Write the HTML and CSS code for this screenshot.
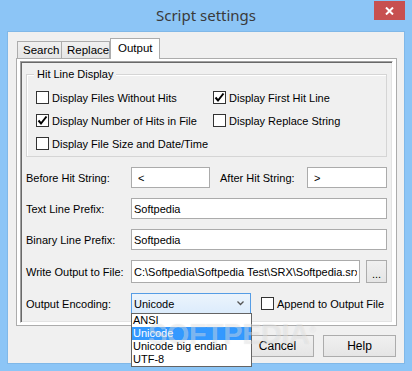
FILE: index.html
```html
<!DOCTYPE html>
<html lang="en">
<head>
  <meta charset="UTF-8" />
  <title>Script settings</title>
  <link rel="stylesheet" href="styles.css">
</head>
<body>

  <div class="window">
    <!-- Title bar -->
    <div class="titlebar">
      <span></span>
      <span class="title">Script settings</span>
      <button class="close-btn" aria-label="Close">
        <svg width="9" height="8" viewBox="0 0 9 8"><path d="M1 0.5 L8 7.5 M8 0.5 L1 7.5" stroke="#fff" stroke-width="2"/></svg>
      </button>
    </div>

    <div class="client">
      <!-- Tabs -->
      <div class="tabs">
        <div class="tab tab-search">Search</div>
        <div class="tab tab-replace">Replace</div>
        <div class="tab tab-output active">Output</div>
      </div>

      <div class="tab-panel">
        <div class="frame">

          <div class="group">
            <div class="legend">Hit Line Display</div>
            <div class="group-grid">
              <label class="check"><span class="box"></span>Display Files Without Hits</label>
              <label class="check"><span class="box checked"><svg width="11" height="11" viewBox="0 0 11 11"><path d="M1.5 5.5 L4 8.5 L9.5 1.5" fill="none" stroke="#000" stroke-width="2"/></svg></span>Display First Hit Line</label>
              <label class="check"><span class="box checked"><svg width="11" height="11" viewBox="0 0 11 11"><path d="M1.5 5.5 L4 8.5 L9.5 1.5" fill="none" stroke="#000" stroke-width="2"/></svg></span>Display Number of Hits in File</label>
              <label class="check"><span class="box"></span>Display Replace String</label>
              <label class="check"><span class="box"></span>Display File Size and Date/Time</label>
            </div>
          </div>

          <div class="form-row row-hit">
            <span class="field-label">Before Hit String:</span>
            <input class="text-input short padded" type="text" value="<">
            <span class="field-label after-label">After Hit String:</span>
            <input class="text-input grow padded" type="text" value=">">
          </div>

          <div class="form-row">
            <span class="field-label">Text Line Prefix:</span>
            <input class="text-input grow" type="text" value="Softpedia">
          </div>

          <div class="form-row">
            <span class="field-label">Binary Line Prefix:</span>
            <input class="text-input grow" type="text" value="Softpedia">
          </div>

          <div class="form-row row-file">
            <span class="field-label">Write Output to File:</span>
            <input class="text-input grow" type="text" value="C:\Softpedia\Softpedia Test\SRX\Softpedia.srx">
            <button class="browse-btn">...</button>
          </div>

          <div class="form-row">
            <span class="field-label">Output Encoding:</span>
            <div class="combo-wrap">
              <div class="combo">
                <span>Unicode</span>
                <svg width="7" height="5" viewBox="0 0 7 5"><path d="M0.5 0.5 L3.5 3.5 L6.5 0.5" fill="none" stroke="#555" stroke-width="1.3"/></svg>
              </div>
              <ul class="combo-list">
                <li>ANSI</li>
                <li class="selected">Unicode</li>
                <li>Unicode big endian</li>
                <li>UTF-8</li>
              </ul>
            </div>
            <label class="check append-check"><span class="box"></span>Append to Output File</label>
          </div>

        </div>
      </div>

      <div class="buttons">
        <button class="btn">OK</button>
        <button class="btn">Cancel</button>
        <button class="btn">Help</button>
      </div>

      <div class="watermark">SOFTPEDIA<sup>®</sup></div>
    </div>
  </div>

</body>
</html>
```

FILE: styles.css
```css
body {
  margin: 0;
  padding: 0;
  font-family: "Liberation Sans", Arial, sans-serif;
  font-size: 11px;
  color: #000;
}
.window {
  width: 412px;
  height: 371px;
  box-sizing: border-box;
  padding: 0 7px 7px;
  background: #8cc5f6;
  display: flex;
  flex-direction: column;
}
.titlebar {
  height: 31px;
  flex-shrink: 0;
  display: grid;
  grid-template-columns: 1fr auto 1fr;
  margin: 0 -7px;
}
.title {
  font-family: "Noto Sans", sans-serif;
  font-size: 15px;
  color: #3a3a3a;
  line-height: 30px;
}
.close-btn {
  justify-self: end;
  width: 31px;
  height: 19px;
  margin: 1px 7px 0 0;
  padding: 0;
  border: none;
  background: #c75050;
  display: flex;
  align-items: center;
  justify-content: center;
}
.client {
  flex: 1;
  position: relative;
  background: #f0f0f0;
  border: 1px solid #80b8e8;
  display: flex;
  flex-direction: column;
}

/* tabs */
.tabs {
  display: flex;
  align-items: flex-end;
  margin: 6px 0 0 9px;
  height: 20px;
}
.tab {
  box-sizing: border-box;
  height: 17px;
  border: 1px solid #acacac;
  border-bottom: none;
  background: linear-gradient(#f0f0f0, #e5e5e5);
  font-size: 11.5px;
  line-height: 16px;
  padding-left: 5px;
}
.tab-search { width: 45px; }
.tab-replace { width: 49px; margin-left: -1px; }
.tab-output { width: 50px; }
.tab.active {
  height: 21px;
  margin-bottom: -1px;
  background: #fff;
  position: relative;
  z-index: 1;
  line-height: 18px;
  padding-left: 7px;
}
.tab-panel {
  box-sizing: border-box;
  width: 381px;
  height: 268px;
  margin-left: 8px;
  padding: 2px 3px;
  background: #fff;
  border: 1px solid #acacac;
}
.frame {
  box-sizing: border-box;
  height: 100%;
  background: #f0f0f0;
  border: 1px solid;
  border-color: #a0a0a0 #fff #fff #a0a0a0;
  box-shadow: inset 1px 1px 0 #696969, inset -1px -1px 0 #e3e3e3;
  padding: 0 5px 0 5px;
  display: flex;
  flex-direction: column;
}

/* group box */
.group {
  margin-top: 12px;
  border: 1px solid #d5d5d5;
  box-shadow: inset 1px 1px 0 #fff;
  padding: 0 0 1px 9px;
}
.legend {
  display: table;
  margin: -7px 0 5px -2px;
  padding: 0 3px;
  background: #f0f0f0;
  line-height: 13px;
}
.group-grid {
  display: grid;
  grid-template-columns: 177px 1fr;
  grid-auto-rows: 23px;
}
.check {
  display: flex;
  align-items: center;
  gap: 3px;
  white-space: nowrap;
}
.box {
  box-sizing: border-box;
  width: 13px;
  height: 13px;
  border: 1px solid #333;
  background: #fff;
  display: flex;
  align-items: center;
  justify-content: center;
  flex-shrink: 0;
}

/* form rows */
.form-row {
  display: flex;
  align-items: center;
  height: 21px;
  margin-top: 10px;
}
.row-file {
  height: 23px;
  gap: 6px;
}
.field-label {
  width: 105px;
  flex-shrink: 0;
  white-space: nowrap;
}
.row-file .field-label {
  margin-right: -6px;
}
.after-label {
  width: 87px;
  margin-left: 10px;
}
.text-input {
  box-sizing: border-box;
  height: 100%;
  border: 1px solid #ababab;
  background: #fff;
  font: inherit;
  padding: 0 2px;
  margin: 0;
  outline: none;
  min-width: 0;
}
.text-input.short { width: 79px; }
.text-input.grow { flex: 1; }
.text-input.padded { padding-left: 6px; }
.browse-btn {
  box-sizing: border-box;
  width: 21px;
  height: 100%;
  border: 1px solid #acacac;
  background: linear-gradient(#f0f0f0, #e5e5e5);
  font: inherit;
  padding: 4px 0 0;
}

/* combo box */
.combo-wrap {
  position: relative;
  width: 120px;
  height: 100%;
}
.combo {
  box-sizing: border-box;
  height: 100%;
  border: 1px solid #569de5;
  background: linear-gradient(#ecf4fc, #dcecfc);
  display: flex;
  align-items: center;
  justify-content: space-between;
  padding: 0 6px 0 2px;
}
.combo-list {
  position: absolute;
  top: 20px;
  left: 0;
  width: 121px;
  margin: 0;
  padding: 0;
  list-style: none;
  box-sizing: border-box;
  border: 1px solid #646464;
  background: #fff;
  z-index: 5;
}
.combo-list li {
  height: 13px;
  line-height: 13px;
  padding-left: 1px;
}
.combo-list li.selected {
  background: #3399ff;
  color: #fff;
}
.append-check {
  margin-left: 10px;
}

/* dialog buttons */
.buttons {
  display: flex;
  justify-content: flex-end;
  gap: 9px;
  margin: 9px 8px 0 0;
}
.btn {
  box-sizing: border-box;
  width: 73px;
  height: 22px;
  border: 1px solid #acacac;
  background: linear-gradient(#f0f0f0, #e5e5e5);
  font-family: "Liberation Sans", Arial, sans-serif;
  font-size: 12px;
  padding: 0;
}

.watermark {
  position: absolute;
  left: 140px;
  top: 286px;
  font-size: 29px;
  font-weight: bold;
  letter-spacing: -0.5px;
  color: rgba(255, 255, 255, 0.4);
  text-shadow: 0 0 1px rgba(0, 0, 0, 0.1);
  pointer-events: none;
  z-index: 10;
}
.watermark sup {
  font-size: 9px;
  font-weight: normal;
}
```
